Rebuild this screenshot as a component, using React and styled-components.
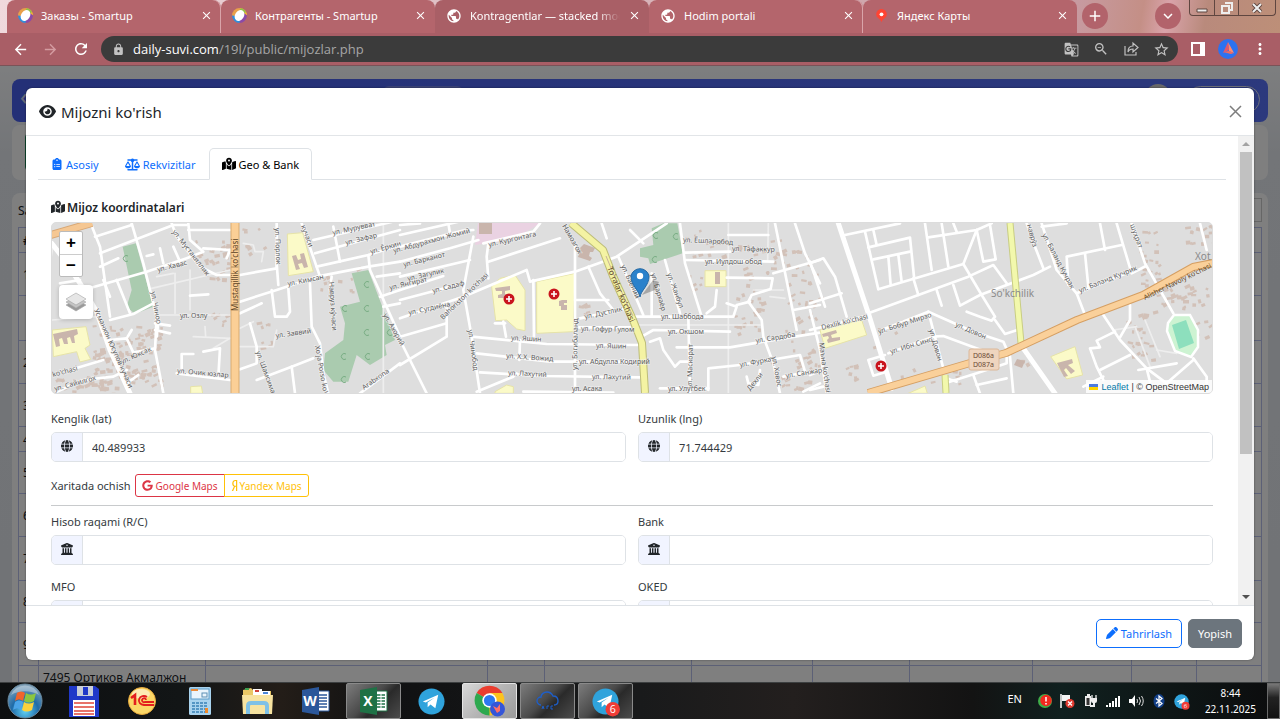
import React from "react";
import styled, { createGlobalStyle, css } from "styled-components";
import {
  FaEye,
  FaClipboardList,
  FaScaleBalanced,
  FaMapLocationDot,
  FaGlobe,
  FaBuildingColumns,
  FaGoogle,
  FaYandex,
  FaPen,
} from "react-icons/fa6";
import {
  MdArrowBack,
  MdArrowForward,
  MdRefresh,
  MdLock,
  MdGTranslate,
  MdZoomOut,
  MdStarBorder,
  MdMoreVert,
  MdClose,
  MdAdd,
  MdExpandMore,
  MdPublic,
} from "react-icons/md";

const uiFont = `"Noto Sans", "Open Sans", sans-serif`;

const GlobalStyle = createGlobalStyle`
  *, *::before, *::after { box-sizing: border-box; }
  body { margin: 0; font-family: ${uiFont}; font-size: 11px; color: #212529; }
  button, input { font: inherit; color: inherit; margin: 0; }
  button { padding: 0; border: 0; background: none; cursor: pointer; }
  a { text-decoration: none; }
  svg { display: block; flex: none; }
`;

const Desktop = styled.div`
  height: 100vh;
  display: flex;
  flex-direction: column;
  overflow: hidden;
`;

/* ---------- browser chrome ---------- */

const TabStrip = styled.header`
  display: flex;
  flex: none;
  height: 33px;
  padding-left: 7px;
  background: linear-gradient(100deg, #f0d9dd 0%, #c79aa0 84%, #c48f86 89%, #d9a3aa 91%, #b98a7c 94%, #bd8f78 100%);
`;

const Tab = styled.div`
  flex: 0 1 214px;
  min-width: 0;
  display: flex;
  align-items: center;
  gap: 8px;
  padding: 0 8px 2px 11px;
  border-radius: 8px 8px 0 0;
  color: #fff;
  background: ${(p) => (p.$active ? "#a95f66" : "#b4656c")};
  box-shadow: ${(p) => (p.$divided ? "inset -1px 0 0 #d9a4a9" : "none")};
`;

const TabTitle = styled.span`
  flex: 1;
  min-width: 0;
  overflow: hidden;
  white-space: nowrap;
  font-size: 11px;
  ${(p) => p.$fade && css`mask-image: linear-gradient(90deg, #000 85%, transparent);`}
`;

const StripButton = styled.button`
  width: 26px;
  height: 26px;
  margin: 3px 0 0 ${(p) => p.$gap}px;
  flex: none;
  display: grid;
  place-items: center;
  border-radius: 50%;
  background: #b2636b;
  color: #fff;
`;

const PlainButton = styled.button`
  display: grid;
  place-items: center;
  flex: none;
`;

const WindowButtons = styled.div`
  display: flex;
  flex: none;
  height: 16px;
  margin: 0 4px 0 auto;
  border: 1px solid #5f4640;
  border-top: 0;
  border-radius: 0 0 4px 4px;
`;

const WindowButton = styled.button`
  width: ${(p) => p.$wide || 24}px;
  display: grid;
  place-items: center;
  & + & { border-left: 1px solid #5f4640; }
`;

const Toolbar = styled.div`
  flex: none;
  height: 33px;
  display: flex;
  align-items: center;
  padding: 0 11px 0 12px;
  background: #a95e66;
  color: #fff;
  border-bottom: 1px solid #7a5358;
`;

const NavButtons = styled.nav`
  display: flex;
  gap: 13px;
  margin-right: 11px;
`;

const Omnibox = styled.div`
  flex: 1;
  height: 26px;
  display: flex;
  align-items: center;
  gap: 8px;
  padding: 0 8px 0 11px;
  border-radius: 13px;
  background: #3b3b3b;
  color: #c2c2c2;
`;

const Address = styled.div`
  flex: 1;
  font-family: "Open Sans", sans-serif;
  font-size: 13px;
  color: #a6a6a6;
  b { font-weight: 400; color: #fff; }
`;

const OmniActions = styled.div`
  display: flex;
  gap: 14px;
`;

const BrowserActions = styled.div`
  display: flex;
  align-items: center;
  gap: 13px;
  margin-left: 13px;
`;

/* ---------- page behind the dialog ---------- */

const Viewport = styled.div`
  position: relative;
  flex: 1;
  min-height: 0;
  overflow: hidden;
  background: linear-gradient(#fbfdff 0, #e6eaf0 90px, #e2e6ec 100%);
`;

const Page = styled.div`
  height: 100%;
  overflow: hidden;
  padding: 13px 12px 0;
  font-size: 12px;
`;

const Navbar = styled.div`
  height: 43px;
  display: flex;
  align-items: flex-start;
  justify-content: flex-end;
  gap: 16px;
  padding: 5px 8px 0 8px;
  border-radius: 8px;
  color: #fff;
  background: linear-gradient(90deg, #4860ee, #5872fa);
`;

const BackMark = styled.button`
  width: 28%;
  margin-top: 4px;
  text-align: left;
  font-size: 24px;
  line-height: 16px;
  color: #cdd3f0;
`;

const NavSearch = styled.span`
  width: 80px;
  height: 28px;
  margin: 2px auto 0 0;
  border-radius: 6px;
  background: #7686ee;
`;

const Avatar = styled.span`
  width: 26px;
  height: 26px;
  border-radius: 50%;
  background: #d0d0d0;
`;

const Pill = styled.span`
  width: 73px;
  height: 27px;
  margin-top: 2px;
  border: 1px solid #dfe3f5;
  border-radius: 14px;
`;

const Card = styled.section`
  margin-top: ${(p) => p.$gap}px;
  height: ${(p) => p.$h || "auto"};
  padding: ${(p) => p.$pad || "0"};
  border-radius: 8px;
  background: #fff;
`;

const FilterField = styled.div`
  width: 50%;
  height: 38px;
  border: 1px solid #198754;
  border-radius: 4px;
`;

const CardTools = styled.div`
  display: flex;
  align-items: center;
  height: 34px;
`;

const SearchSpot = styled.span`
  width: 120px;
  height: 24px;
  margin-left: auto;
  border: 1px solid #ccc;
`;

const DataTable = styled.table`
  width: 100%;
  table-layout: fixed;
  border-collapse: collapse;
  th, td {
    border: 1px solid #b9c1ec;
    padding: 0 4px;
    text-align: left;
    font-size: 12px;
  }
`;

const DataRow = styled.tr`
  height: ${(p) => p.$h}px;
`;

const NameCell = styled.td`
  vertical-align: top;
  line-height: 24px;
`;

/* ---------- dialog ---------- */

const Backdrop = styled.div`
  position: absolute;
  inset: 0;
  display: flex;
  padding: 22px 26px;
  background: rgba(0, 0, 0, 0.5);
`;

const Dialog = styled.div`
  flex: 1;
  min-width: 0;
  display: flex;
  flex-direction: column;
  border-radius: 6px;
  overflow: hidden;
  background: #fff;
  box-shadow: 0 0 2px rgba(0, 0, 0, 0.5);
`;

const DialogHeader = styled.div`
  flex: none;
  height: 48px;
  display: flex;
  align-items: center;
  gap: 5px;
  padding: 0 12px 0 13px;
  border-bottom: 1px solid #e2e5e8;
`;

const DialogTitle = styled.h1`
  margin: 0;
  flex: 1;
  font-size: 15px;
  font-weight: 400;
`;

const DialogMain = styled.div`
  flex: 1;
  min-height: 0;
  display: flex;
`;

const DialogBody = styled.div`
  flex: 1;
  min-width: 0;
  overflow: hidden;
  padding: 12px 12px 0;
`;

const Scrollbar = styled.div`
  width: 16px;
  flex: none;
  display: flex;
  flex-direction: column;
  align-items: center;
  background: #f1f1f1;
`;

const ScrollArrow = styled.button`
  width: 16px;
  height: 16px;
  flex: none;
  display: grid;
  place-items: center;
`;

const ScrollTrack = styled.div`
  flex: 1;
  width: 12px;
`;

const ScrollThumb = styled.div`
  height: 69%;
  background: #c1c1c1;
`;

const TabNav = styled.div`
  display: flex;
  height: 32px;
  border-bottom: 1px solid #dee2e6;
`;

const NavTab = styled.button`
  display: flex;
  align-items: center;
  gap: 3px;
  height: 32px;
  padding: 0 12px;
  border: 1px solid transparent;
  border-radius: 5px 5px 0 0;
  color: #0d6efd;
  ${(p) => p.$active && css`
    color: #000;
    background: #fff;
    border-color: #dee2e6;
    border-bottom-color: #fff;
  `}
`;

const Panel = styled.div`
  padding: 18px 13px 0;
`;

const SectionTitle = styled.h2`
  display: flex;
  align-items: center;
  gap: 2px;
  height: 18px;
  margin: 0 0 6px;
  font-size: 12px;
  font-weight: 600;
`;

const MapFrame = styled.div`
  position: relative;
  height: 172px;
  border: 1px solid #dcdcdc;
  border-radius: 5px;
  overflow: hidden;
  background: #dedede;
  svg.tiles { width: 100%; height: 100%; }
`;

const ZoomControl = styled.div`
  position: absolute;
  left: 7px;
  top: 8px;
  width: 24px;
  border: 1px solid #bbb;
  border-radius: 2px;
  background: #fff;
`;

const ZoomButton = styled.button`
  display: block;
  width: 100%;
  height: 22px;
  font: 700 17px/20px "Liberation Sans", sans-serif;
  color: #000;
  & + & { border-top: 1px solid #ccc; }
`;

const LayersButton = styled.button`
  position: absolute;
  left: 7px;
  top: 62px;
  width: 34px;
  height: 34px;
  display: grid;
  place-items: center;
  border-radius: 4px;
  background: #fff;
  box-shadow: 0 1px 4px rgba(0, 0, 0, 0.2);
`;

const Attribution = styled.div`
  position: absolute;
  right: 0;
  bottom: 0;
  display: flex;
  align-items: center;
  gap: 3px;
  height: 13px;
  padding: 0 3px;
  background: rgba(255, 255, 255, 0.85);
  font: 9px "Liberation Sans", sans-serif;
  color: #333;
  a { color: #0078a8; }
`;

const FieldGrid = styled.div`
  display: grid;
  grid-template-columns: 1fr 1fr;
  gap: 13px 12px;
  margin-top: ${(p) => p.$top}px;
`;

const FieldLabel = styled.label`
  display: block;
  height: 18px;
  line-height: 18px;
  margin-bottom: 4px;
  color: #343a40;
`;

const InputGroup = styled.div`
  display: flex;
  height: 30px;
  border: 1px solid #dee2e6;
  border-radius: 5px;
  overflow: hidden;
`;

const Addon = styled.span`
  width: 31px;
  flex: none;
  display: grid;
  place-items: center;
  padding-bottom: 2px;
  border-right: 1px solid #dee2e6;
  background: #f1f4ff;
`;

const TextInput = styled.input`
  flex: 1;
  min-width: 0;
  padding: 1px 9px 0;
  border: 0;
  outline: 0;
  background: #fff;
  color: #343a40;
`;

const OpenRow = styled.div`
  display: flex;
  align-items: center;
  gap: 4px;
  height: 23px;
  margin-top: 12px;
  color: #343a40;
`;

const ButtonGroup = styled.div`
  display: flex;
  height: 23px;
`;

const MapLink = styled.a`
  display: flex;
  align-items: center;
  gap: 3px;
  padding: 0 6px;
  border: 1px solid;
  font-size: 10px;
  color: ${(p) => p.$tone};
  &:first-child { border-radius: 3px 0 0 3px; }
  &:last-child { gap: 0; padding: 0 6px 0 4px; border-radius: 0 3px 3px 0; margin-left: -1px; }
`;

const Rule = styled.hr`
  margin: 8px 0 0;
  border: 0;
  border-top: 1px solid #c8cacc;
`;

const DialogFooter = styled.div`
  flex: none;
  height: 55px;
  display: flex;
  align-items: center;
  justify-content: flex-end;
  gap: 6px;
  padding: 0 12px;
  border-top: 1px solid #dee2e6;
`;

const ActionButton = styled.button`
  display: flex;
  align-items: center;
  gap: 3px;
  height: 29px;
  padding: 0 9px;
  border: 1px solid ${(p) => (p.$solid ? "#6c757d" : "#0d6efd")};
  border-radius: 5px;
  background: ${(p) => (p.$solid ? "#6c757d" : "#fff")};
  color: ${(p) => (p.$solid ? "#fff" : "#0d6efd")};
`;

/* ---------- taskbar ---------- */

const Taskbar = styled.footer`
  flex: none;
  height: 37px;
  display: flex;
  align-items: stretch;
  border-top: 1px solid #3c3f40;
  background: linear-gradient(90deg, #0d0f10 0, #121516 14%, #231d18 22%, #101112 30%, #191a1b 50%, #231f1e 62%, #131313 76%, #10201f 83%, #0c0c0d 100%);
  color: #fff;
`;

const StartButton = styled.button`
  width: 50px;
  margin-right: 6px;
  display: grid;
  place-items: center;
`;

const TaskButton = styled.button`
  width: 55px;
  margin-right: 3px;
  display: grid;
  place-items: center;
  border: 1px solid transparent;
  border-radius: 2px;
  ${(p) => p.$open && css`
    border-color: #8a8a8a;
    background: linear-gradient(135deg, #7c7c7c 0%, #4a4a4a 45%, #2a2a2a 60%, #4b4b4b 100%);
  `}
  ${(p) => p.$current && css`
    border-color: #e4e4e4;
    background: linear-gradient(135deg, #d8d8d8 0%, #b5b5b5 50%, #9a9a9a 100%);
  `}
`;

const Tray = styled.div`
  display: flex;
  align-items: center;
  gap: 7px;
  margin-left: auto;
`;

const Language = styled.span`
  font-size: 11px;
  margin: 0 9px 6px 0;
`;

const Clock = styled.div`
  margin: 0 4px 0 9px;
  text-align: center;
  font-size: 10px;
  line-height: 16px;
`;

const ShowDesktop = styled.button`
  width: 13px;
  height: 36px;
  border: 1px solid #6a6a6a;
  background: linear-gradient(#777, #222 40%, #111);
`;

/* ---------- map drawing ---------- */

const west = {
  minor: [
    "272,280 300,350 330,560", "395,280 430,400 470,560 465,660 490,790", "285,320 395,285",
    "300,370 520,285 560,285", "300,410 355,385", "250,480 440,425 560,385 610,365 570,330 565,280",
    "330,570 400,552 460,520", "350,450 390,550", "310,450 330,500", "440,378 460,373", "480,355 490,400",
    "520,350 540,395", "610,355 690,360 680,385", "565,300 690,300", "515,280 530,320 600,410 650,435 690,435", "720,435 830,415 830,280",
    "720,515 830,480 950,440 1105,410 1200,395", "720,550 785,520", "815,480 825,560 860,560 870,545 865,475",
    "830,400 835,465", "930,460 935,590 960,640 970,730 985,790", "905,280 960,440", "940,330 1200,270",
    "945,370 1200,300", "950,410 1105,375 1200,345", "1000,290 1020,395", "995,440 990,480", "465,580 510,587",
    "465,600 510,610", "475,575 470,620", "545,730 545,672 580,672", "610,665 660,655 655,740",
    "330,630 380,625 400,668 465,655", "380,625 395,600", "210,720 310,690", "170,785 250,750 340,740 380,720",
    "530,730 690,750", "720,718 770,700 770,650 750,580", "770,750 875,710 940,685", "875,710 885,790",
    "1105,375 1110,420 1200,620", "1080,790 1200,700", "1140,500 1200,480", "1130,440 1200,430",
    "1150,530 1200,520", "570,497 625,493", "180,460 240,450", "380,760 415,735",
  ],
  faint: [
    "455,475 690,420", "470,555 690,555", "580,620 690,625", "615,590 617,620", "525,430 525,550", "570,420 570,540",
    "720,595 760,575", "730,340 760,345 765,365 790,365 785,395", "160,345 150,400", "640,655 690,625",
    "720,650 820,650 830,600", "1150,280 1150,790", "520,430 470,440", "155,570 290,560",
  ],
  major: ["155,340 190,385 240,460 290,545 330,660 390,790"],
  green: ["368,350 408,340 460,530 405,552 380,530 395,480",
    "1055,430 1105,420 1185,630 1155,645 1160,675 1110,705 1070,675 1045,755 1000,755 970,720 975,670 1030,630 1035,580 1020,530 1080,515"],
  yellow: ["862,312 908,308 940,425 865,437", "157,600 258,590 270,645 255,655 272,688 240,696 230,665 160,680", "572,770 604,768 608,790 572,790"],
};

const centre = {
  minor: [
    "0,75 220,25", "0,45 60,40", "0,155 150,115 235,90", "0,110 190,62 220,60", "0,200 210,150", "0,240 130,198",
    "0,270 190,220", "0,325 190,260 380,180 390,215 525,185 650,140 800,40", "265,100 260,140 265,205",
    "265,155 480,85", "250,100 400,65 420,40", "220,80 190,240 215,380 240,550", "145,40 150,70",
    "0,380 140,340", "0,465 140,380 140,290", "215,380 440,402 720,405", "230,430 450,455 720,455",
    "240,487 430,498 720,502", "230,545 340,500 350,490", "400,210 402,380", "525,110 525,550", "525,270 625,270", "565,170 600,250 640,300",
    "540,325 680,295", "690,320 1000,320 1010,290 980,280", "525,352 690,352", "725,380 760,360 990,365", "830,412 990,412 1090,395 1260,368",
    "655,140 730,315", "755,190 755,320", "795,150 840,310", "840,40 855,160 905,320", "865,320 870,550",
    "750,395 780,385 790,420 825,470 840,455 870,455", "925,540 925,475 1020,465 1200,435 1215,485", "780,535 925,535",
    "855,150 1120,155", "855,128 990,125", "985,75 1105,75", "980,203 1118,205 1112,237 1055,255 1045,275 1085,330 1090,380 1120,460 1140,550",
    "1125,40 1190,360", "1185,40 1215,130 1260,220", "1120,190 1260,150", "1180,300 1260,285", "605,40 620,85",
    "0,390 80,550", "310,335 318,380", "285,340 315,340", "360,390 358,450", "370,545 640,548", "730,100 690,60",
    "1010,285 1050,275", "1040,500 1045,520 1075,525 1080,480", "1150,500 1260,480", "1210,545 1260,520", "950,240 945,290 920,310",
  ],
  faint: ["700,345 1080,345", "985,40 985,550", "1105,40 1103,150", "1060,240 1150,240", "1110,260 1155,265", "870,400 870,420"],
  major: [],
  green: ["755,55 790,40 832,40 848,130 750,162 745,145 720,140 720,115 760,105"],
  yellow: ["275,230 300,205 345,195 375,240 375,362 350,357 320,330 287,332", "410,215 525,190 520,365 410,370", "915,182 978,182 978,230 915,230", "285,545 320,525 340,530 340,550 285,550"],
};

const east = {
  minor: [
    "105,315 270,280", "165,305 205,478 460,402", "175,352 300,323 312,440", "190,388 300,365", "235,380 242,465",
    "190,300 200,345", "265,375 275,455", "345,280 365,420", "355,322 500,300 545,280", "395,280 415,410",
    "430,280 440,305", "500,300 520,395 557,388 540,285", "500,300 460,402 515,495 555,560 545,572 510,560 470,545",
    "175,550 325,495 475,440 550,405 590,460", "310,445 325,495", "380,480 395,527", "430,465 450,527 510,495 670,435 720,410",
    "215,600 355,545 400,715", "355,545 490,605 580,635 600,680 610,790", "235,670 370,620 400,618 540,670",
    "555,570 585,612 622,600", "230,725 190,737 175,690 225,675", "650,280 675,350 700,415", "695,280 740,420 800,490 825,555",
    "695,290 770,280", "775,465 770,380 935,345", "825,370 835,470", "870,280 885,360", "920,280 965,430 1008,408",
    "800,490 960,425", "965,280 1005,400 1090,550", "960,525 960,570 930,622", "880,555 930,630 1010,715 1070,760 1150,690",
    "915,605 860,632 870,652 840,655 860,710 880,750", "870,720 960,675", "1150,685 1190,740 1190,760", "1170,280 1190,360",
    "0,400 40,385 75,440 110,560", "0,520 95,490", "0,600 160,560", "0,540 30,660 50,790", "0,395 45,530",
    "405,760 500,730 590,700 590,675", "410,745 440,755", "490,735 510,790", "500,765 590,745", "1010,715 1020,755",
    "985,720 1100,700", "820,770 880,740", "0,735 50,715", "0,780 40,770",
  ],
  faint: ["975,590 1020,710", "1005,570 1050,680", "910,600 980,590", "1040,660 1100,670"],
  major: ["85,280 175,550 245,775", "640,655 735,790"],
  green: [],
  yellow: ["30,600 155,570 170,615 45,655", "722,680 795,650 818,735 770,747", "295,790 345,768 352,790"],
};

/* clusters of small houses: x, y, width, height, count */
const houseClusters = [
  [195, 240, 34, 40, 34], [92, 325, 70, 62, 110], [52, 375, 60, 18, 30], [240, 225, 24, 34, 7],
  [150, 330, 12, 14, 6], [255, 320, 24, 28, 8], [314, 277, 42, 14, 10], [205, 310, 20, 14, 6],
  [683, 230, 44, 30, 12], [685, 268, 20, 24, 5], [735, 238, 70, 66, 36], [733, 305, 30, 30, 16],
  [780, 250, 40, 120, 36], [576, 305, 10, 14, 5], [1138, 225, 20, 60, 22],
  [1150, 285, 56, 22, 30], [1184, 223, 28, 20, 14], [1120, 310, 36, 50, 24], [1195, 320, 14, 20, 5],
  [835, 365, 20, 20, 8], [872, 320, 40, 30, 6], [900, 366, 70, 20, 10], [1018, 352, 12, 12, 3],
  [770, 360, 50, 30, 16], [350, 265, 14, 22, 5],
];

const houses = [];
let seed = 11;
const rnd = () => {
  seed = (seed * 16807) % 2147483647;
  return seed / 2147483647;
};
houseClusters.forEach(([x, y, w, h, n]) => {
  for (let i = 0; i < n; i += 1) {
    houses.push([x + rnd() * w, y + rnd() * h, 2 + rnd() * 4, 2 + rnd() * 2, rnd() * 50 - 35]);
  }
});

const streets = [
  ["ул. Мустакиллик", 172, 232, 52], ["ул. Хавас", 158, 272, -14], ["ул. Озлу", 180, 318, 0],
  ["ул. Чинор", 151, 292, 80], ["ул. Юксак", 122, 364, -24], ["ул. Очик юзлар", 177, 373, 5],
  ["ул. Сайилгох", 55, 391, -15], ["ko'chasi", 53, 377, -15], ["Усманхон Юсупов кучаси", 94, 310, 66],
  ["ул. Порлок", 275, 228, 88], ["кучаси", 301, 226, 70], ["ул. Кимсан", 288, 286, -11],
  ["ул. Заввий", 276, 338, -8], ["ул. Шамсимат", 256, 352, 70], ["ул. Мурувват", 333, 235, -12],
  ["ул. Зафар", 346, 245, -14], ["ул. Ёркин", 371, 254, -16], ["Навруз кўчаси", 329, 282, 86],
  ["Xo'ja Porso ko'chasi", 315, 346, 80], ["ул. Ахорий", 383, 315, 60], ["Arabxona", 364, 390, -35],
  ["ул. Абдурахмон Жомий", 394, 253, -15], ["ул. Барканот", 404, 267, -14], ["ул. Загулик", 408, 281, -13],
  ["ул. Янгират", 390, 290, -13], ["ул. Садаф", 433, 293, -14], ["ул. Сугдиёна", 409, 315, -12],
  ["Bahoriston ko'chasi", 443, 320, -44], ["ул. Кургонтагa", 489, 247, -13], ["ул. Чинобод", 468, 330, 82],
  ["Намозгох", 562, 226, 60], ["ул. Богибаланд", 577, 370, -89], ["ул. Яшин", 511, 340, 3],
  ["ул. Х.Х. Вожид", 506, 358, 4], ["ул. Лахутий", 508, 375, 3], ["ул. Дустлик", 585, 319, -12],
  ["ул. Гофур Гулом", 581, 331, 1], ["ул. Яшин", 596, 348, 1], ["ул. Абдулла Кодирий", 579, 364, 0],
  ["ул. Лахутий", 592, 379, 1], ["ул. Асака", 572, 391, 0], ["ул. Баёний", 621, 266, 66],
  ["ул. Бархаёр", 651, 274, 74], ["ул. Жанбул", 667, 274, 70], ["ул. Шаббода", 661, 319, 0],
  ["ул. Окшом", 668, 334, 0], ["ул. Маскорат", 692, 388, -89], ["ул. Улугбек", 668, 391, 0],
  ["ул. Ёшларобод", 683, 242, 3], ["ул. Тафаккур", 732, 251, 1], ["ул. Иулдош обод", 705, 264, 0],
  ["ул. Сардоба", 756, 343, -9], ["ул. Фуркат", 740, 367, -10], ["ул. Санжар", 786, 378, -9],
  ["ул. Ховос", 772, 357, 80], ["Дехли", 750, 391, -50],
  ["Dexlik ko'chasi", 822, 330, -14], ["Маъна ko'chasi", 819, 343, 82], ["ул. Бобур Мирзо", 879, 334, -18],
  ["ул. Ибн Сино", 891, 354, -17], ["ул. Довон", 955, 326, 24], ["ул. Довон", 929, 330, 74],
  ["наврўз", 1027, 225, 75], ["ул. Баланд Кучрак", 1042, 235, 62], ["ул. Баланд Кучрик", 1080, 293, -22],
  ["шуҳрат", 1130, 225, 70],
];

const Lines = ({ list, color, width }) => (
  <g fill="none" stroke={color} strokeWidth={width} strokeLinejoin="round" strokeLinecap="round">
    {list.map((p) => <polyline key={p} points={p} />)}
  </g>
);

const District = ({ at, data }) => (
  <g transform={`translate(${at}) scale(0.33333)`}>
    {data.green.map((p) => <polygon key={p} points={p} fill="#aacbaf" />)}
    {data.yellow.map((p) => <polygon key={p} points={p} fill="#fbfac8" stroke="#e6e3a8" strokeWidth="3" />)}
    <Lines list={data.faint} color="#eeeeee" width={5} />
    <Lines list={data.minor} color="#ffffff" width={8} />
    <Lines list={data.major} color="#ffffff" width={15} />
  </g>
);

const Highway = ({ points, casing, fill, width }) => (
  <g fill="none" strokeLinejoin="round">
    <polyline points={points} stroke={casing} strokeWidth={width + 2} />
    <polyline points={points} stroke={fill} strokeWidth={width} />
  </g>
);

const Hospital = ({ x, y }) => (
  <g>
    <circle cx={x} cy={y} r="5.5" fill="#c9141d" />
    <path d={`M${x - 3} ${y}h6M${x} ${y - 3}v6`} stroke="#fff" strokeWidth="1.6" />
  </g>
);

const MapDrawing = () => (
  <svg className="tiles" viewBox="51 223 1162 170" preserveAspectRatio="xMidYMid slice" role="img" aria-label="Xarita">
    <rect x="51" y="223" width="1162" height="170" fill="#dedede" />
    <polygon points="478,223 541,223 512,240 475,245" fill="#ead2e2" />
    <g fill="#d2c1b8">
      {houses.map(([x, y, w, h, r], i) => (
        <rect key={i} x={x} y={y} width={w} height={h} transform={`rotate(${r} ${x} ${y})`} />
      ))}
    </g>
    <District at="0 130" data={west} />
    <District at="400 210" data={centre} />
    <District at="810 130" data={east} />
    <g fill="#c9b5ac">
      <path d="M292 256l4-1 2 5 3-1-1-5 4-1 4 14-4 1-2-5-4 1 2 5-4 1z" />
      <path d="M53 334l24-5 1 5-4 2 1 7-3 0-2-6-3 1 1 6-4 0-2-6-3 1 1 7-4 1z" />
      <path d="M495 288l15-2v4l-5 1v3l4 0v4h-11v-3l4-1v-3l-6 0z" />
      <path d="M562 300h5v3h-3v2h3v5h-6v-4h-2v-5z" />
      <path d="M715 272h5v12h-5z M479 223h13v11h-13z" />
      <path d="M580 248l4-4 11 4-2 4-3 0-1 4 3 2-2 3-12-4z" />
      <path d="M822 334l14-4 1 3-6 2 1 3 8-1 0 3-12 3-1-3 2-2-1-2-5 1z" />
      <path d="M1057 363l15-4 1 4-5 2 7 6-4 3-5-6-2 2 4 6-4 1z" />
      <path d="M1017 359l8 2-3 7-8-3z" />
    </g>
    <g fill="none" stroke="#79ad84" strokeWidth="1">
      {[[345, 308], [367, 284], [367, 308], [367, 332], [344, 356], [368, 356], [390, 332], [344, 379], [656, 235], [676, 236], [655, 259], [126, 258]].map(([x, y]) => (
        <path key={`${x}-${y}`} d={`M${x + 2} ${y - 2}a3 3 0 1 0 0 5`} />
      ))}
    </g>
    <Highway points="51,235 92,223" casing="#d8a876" fill="#f5c793" width={6} />
    <Highway points="235,223 235,393" casing="#d9ab70" fill="#fbcf96" width={7} />
    <Highway points="571,223 603,250 613,276 633,320 642,343 645,393" casing="#bdbd78" fill="#f4f3a3" width={6} />
    <polyline points="606,256 616,280 633,316" fill="none" stroke="#c9b39a" strokeWidth="1" />
    <Highway points="1010,223 1021,343" casing="#c8cd82" fill="#f2f8ac" width={5} />
    <Highway points="945,375 946,393" casing="#c8cd82" fill="#f2f8ac" width={5} />
    <Highway points="868,393 970,363 1006,353 1077,320 1143,295 1193,267 1213,263" casing="#d59f63" fill="#fad09a" width={6} />
    <polygon points="1168,323 1174,315 1190,315 1198,330 1198,347 1191,357 1175,351 1167,331" fill="#cdf3d2" stroke="#fff" strokeWidth="2.5" />
    <polygon points="1172,325 1186,320 1194,343 1179,349" fill="#8ddfbd" />
    <Hospital x={509} y={299} />
    <Hospital x={554} y={294} />
    <Hospital x={881} y={366} />
    <g fontFamily={`"Noto Sans", sans-serif`} fontSize="7" fill="#5c5c5c" stroke="#f4f4f4" strokeOpacity="0.6" strokeWidth="1.5" paintOrder="stroke">
      {streets.map(([name, x, y, r]) => (
        <text key={`${name}${x}`} x={x} y={y} transform={`rotate(${r} ${x} ${y})`}>{name}</text>
      ))}
    </g>
    <g fontFamily={`"Noto Sans", sans-serif`} fontSize="8" fill="#5c4526">
      <text x="238" y="311" transform="rotate(-90 238 311)">Mustaqillik ko'chasi</text>
      <text x="607" y="268" transform="rotate(67 607 268)">To'ralar ko'chasi</text>
      <text x="1145" y="300" fontSize="7" transform="rotate(-26 1145 300)">Alisher Navoiy ko'chasi</text>
    </g>
    <g fontFamily={`"Noto Sans", sans-serif`} fontSize="10" fill="#8a8a8a">
      <text x="991" y="297">So'kchilik</text>
      <text x="1195" y="260">Xot</text>
    </g>
    <rect x="969" y="349" width="30" height="21" rx="2" fill="#efd5bf" stroke="#dcb898" />
    <g fontFamily={`"Noto Sans", sans-serif`} fontSize="7" fill="#6b4a34">
      <text x="973" y="358">D086a</text>
      <text x="973" y="367">D087a</text>
    </g>
    <path d="M642 295l11-15 6 2-4 8z" fill="#000" opacity="0.25" />
    <path d="M640 297c-1-7-9-11-9-21a9.200 9.200 0 0 1 18 0c0 10-8 14-9 21z" fill="#2a81cb" stroke="#2368a3" />
    <circle cx="640" cy="276" r="3.200" fill="#fff" />
  </svg>
);

/* ---------- small pictures ---------- */

const SmartupIcon = () => (
  <svg width="15" height="15" viewBox="0 0 15 15">
    <path d="M7.500 0A7.500 7.500 0 0 1 15 7.500L10 5z" fill="#f2b630" />
    <path d="M0 7.500A7.500 7.500 0 0 1 7.500 0l3 5-8 4z" fill="#e9a04a" />
    <path d="M15 7.500A7.500 7.500 0 0 1 7.500 15L6 10l6-5z" fill="#8b4aa8" />
    <path d="M7.500 15A7.500 7.500 0 0 1 0 7.500L4 8l4 4z" fill="#2f8fdc" />
    <path d="M9 0a7.500 7.500 0 0 1 5 4l-3 2-4-3z" fill="#8fc04a" />
    <ellipse cx="7.500" cy="7.500" rx="4.400" ry="5.800" fill="#fff" transform="rotate(35 7.500 7.500)" />
  </svg>
);

const YandexPin = () => (
  <svg width="15" height="15" viewBox="0 0 15 15">
    <path d="M7.500 1a5.300 5.300 0 0 1 5.300 5.300c0 4-4.300 4-5.300 8-1-4-5.300-4-5.300-8A5.300 5.300 0 0 1 7.500 1z" fill="#f43" />
    <circle cx="7.500" cy="6.300" r="1.900" fill="#fff" />
  </svg>
);

const ShareIcon = () => (
  <svg width="16" height="16" viewBox="0 0 16 16" fill="none" stroke="currentColor" strokeWidth="1.200">
    <path d="M2 5v9h11v-3M5 11c0-4 2-6 5-6V2l5 4.500-5 4.500V8c-2 0-4 .5-5 3z" />
  </svg>
);

const SidePanelIcon = () => (
  <svg width="14" height="14" viewBox="0 0 14 14"><path d="M0 0h14v14H0z" fill="#fff" /><path d="M2 2h7v10H2z" fill="#a95e66" /></svg>
);

const ProfileIcon = ({ size = 20 }) => (
  <svg width={size} height={size} viewBox="0 0 20 20">
    <circle cx="10" cy="10" r="10" fill="#2d72f0" />
    <path d="M10 3l1 9 5 2z" fill="#ff8a70" /><path d="M10 3l1 8-6 3z" fill="#e2576b" /><path d="M5 13l6-1 5 2-3 1z" fill="#f06a60" />
  </svg>
);

const LayersIcon = () => (
  <svg width="22" height="22" viewBox="0 0 22 22" stroke="#a5a5a5" strokeWidth=".6">
    <path d="M1 14l10 6 10-6-3-1.500-7 4-7-4z" fill="#9a9a9a" />
    <path d="M1 11l10 6 10-6-3-1.500-7 4-7-4z" fill="#c4c4c4" />
    <path d="M11 2l10 6-10 6L1 8z" fill="#e6e6e6" />
  </svg>
);

const UkraineFlag = () => (
  <svg width="9" height="6" viewBox="0 0 9 6"><path d="M0 0h9v3H0z" fill="#4c7be1" /><path d="M0 3h9v3H0z" fill="#ffd500" /></svg>
);

const WindowsOrb = () => (
  <svg width="36" height="36" viewBox="0 0 36 36">
    <defs>
      <radialGradient id="orb" cx=".5" cy=".8" r=".8"><stop offset="0" stopColor="#5fd0f5" /><stop offset=".5" stopColor="#1f6ba8" /><stop offset="1" stopColor="#8aa7bb" /></radialGradient>
    </defs>
    <circle cx="18" cy="18" r="17" fill="url(#orb)" stroke="#6b8ba0" />
    <path d="M10 10c3-2 5-2 8 0l-2 8c-3-2-5-2-8 0z" fill="#f0642c" />
    <path d="M19 10c3 2 6 2 10 0l-2 8c-4 2-7 2-10 0z" fill="#8cc640" />
    <path d="M8 19c3-2 5-2 8 0l-2 8c-3-2-5-2-8 0z" fill="#4ba4e8" />
    <path d="M17 19c3 2 6 2 10 0l-2 8c-4 2-7 2-10 0z" fill="#fbd13b" />
    <path d="M4 12a15 15 0 0 1 28 0c-8-5-20-5-28 0z" fill="#fff" opacity=".35" />
  </svg>
);

const FloppyIcon = () => (
  <svg width="30" height="31" viewBox="0 0 30 31">
    <path d="M0 0h26l4 3v28H0z" fill="#2038c8" /><path d="M8 0h16v10H8z" fill="#c9ced8" /><path d="M14 1h5v8h-5z" fill="#2038c8" />
    <path d="M4 14h22v16H4z" fill="#fff" /><path d="M5 17h20M5 21h20M5 25h20M5 28h20" stroke="#e0453a" strokeWidth="1.300" />
  </svg>
);

const OneCIcon = () => (
  <svg width="28" height="28" viewBox="0 0 28 28">
    <circle cx="14" cy="14" r="13.500" fill="#fbd767" stroke="#e6a83c" /><ellipse cx="13" cy="7" rx="9" ry="5" fill="#fff" opacity=".5" />
    <path d="M3 11l4-3v10" fill="none" stroke="#e31e1e" strokeWidth="2.600" />
    <path d="M19 10a5 4.500 0 1 0-3 8h10M18 13a2 2 0 1 0-1 2h9" fill="none" stroke="#e31e1e" strokeWidth="1.800" />
  </svg>
);

const CalculatorIcon = () => (
  <svg width="22" height="28" viewBox="0 0 22 28">
    <rect width="22" height="28" rx="1.500" fill="#a9d3ee" /><rect x="2" y="2" width="18" height="10" fill="#eaf5fc" stroke="#5b9cc8" /><path d="M2 3h7" stroke="#e88a3a" strokeWidth="2" />
    <rect x="13" y="6" width="5" height="4" fill="none" stroke="#5b8fb4" />
    <g fill="#5596c4">{[15, 18, 21, 24].map((y) => [3, 7, 11, 15].map((x) => <rect key={`${x}${y}`} x={x} y={y} width="3" height="2" />))}</g>
    <path d="M16 21h3v5h-3z" fill="#f08a2a" />
  </svg>
);

const FolderIcon = () => (
  <svg width="31" height="28" viewBox="0 0 31 28">
    <path d="M1 3l8-2 3 3h17v22H1z" fill="#e9c766" /><path d="M11 2h9v8h-9z M19 4h9v8h-9z" fill="#fff" /><path d="M3 1h4v2H3z" fill="#3c9e50" /><path d="M13 3h4v2h-4z" fill="#d0443a" /><path d="M21 5h5v2h-5z" fill="#4b86d8" />
    <path d="M0 8h31l-1 19H1z" fill="#f7e3a0" /><path d="M6 27v-8q0-3 3-3h13q3 0 3 3v8" fill="none" stroke="#7fc1e6" strokeWidth="4" />
  </svg>
);

const OfficeIcon = ({ color, letter }) => (
  <svg width="28" height="28" viewBox="0 0 28 28">
    <path d="M14 4h13v20H14z" fill="#fff" stroke={color} />
    <path d="M17 8h8M17 11h8M17 14h8M17 17h8M17 20h8" stroke={color} strokeWidth="1.300" />
    {letter === "X" && <path d="M21 6v16" stroke="#fff" />}
    <path d="M0 3l17-3v28L0 25z" fill={color} />
    <text x="8" y="19" textAnchor="middle" fontFamily="Open Sans, sans-serif" fontWeight="700" fontSize="14" fill="#fff">{letter}</text>
  </svg>
);

const TelegramIcon = ({ size = 27, badge }) => (
  <svg width={size} height={size} viewBox="0 0 28 28" overflow="visible">
    <circle cx="14" cy="14" r="13.500" fill="#2fa3dc" /><path d="M5 14l16-7-3 14-5-4-3 3 0-5 7-5-9 5z" fill="#fff" />
    {badge && <g><circle cx="21.500" cy="22" r="7.500" fill="#f03c36" /><text x="21.500" y="26" textAnchor="middle" fontSize="11" fontFamily="Open Sans, sans-serif" fill="#fff">6</text></g>}
  </svg>
);

const ChromeIcon = () => (
  <svg width="32" height="32" viewBox="0 0 32 32">
    <path d="M15.500 15.500L2.600 8A15 15 0 0 1 28.400 8z" fill="#ea3d2f" />
    <path d="M15.500 15.500L2.600 8a15 15 0 0 0 12.900 22.500l6-8z" fill="#2da94f" />
    <path d="M15.500 15.500V8h12.900a15 15 0 0 1-12.900 22.500z" fill="#fcc31e" />
    <circle cx="15.500" cy="15.500" r="7.200" fill="#fff" /><circle cx="15.500" cy="15.500" r="5.600" fill="#2d78f0" />
    <circle cx="23.500" cy="24" r="7.500" fill="#3556d8" /><path d="M19 21l4 2 3-4v7l-3 2z" fill="#ff6f68" />
  </svg>
);

const CloudIcon = () => (
  <svg width="24" height="20" viewBox="0 0 24 20" fill="none" stroke="#1d5fcc" strokeWidth="1.300">
    <path d="M5 14a4 4 0 0 1 0-8c0-3 3-5 6-5s5 2 6 4c4 0 5 3 5 5s-1 4-4 4" />
    <path d="M6 18l1-3 1 3M11 18v-3h2M17 15h-2v3h2" strokeWidth="1" />
  </svg>
);

const AlertTray = () => (
  <svg width="14" height="14" viewBox="0 0 14 14"><circle cx="7" cy="7" r="7" fill="#3fae49" /><circle cx="8" cy="6.500" r="5.700" fill="#f0281e" /><path d="M8 3v4.500M8 9v1.500" stroke="#fff" strokeWidth="1.500" /></svg>
);
const FlagTray = () => (
  <svg width="16" height="14" viewBox="0 0 16 14"><path d="M2 0v14" stroke="#fff" strokeWidth="1.500" /><path d="M3 1h8v6H3z" fill="#f4f4f4" /><circle cx="11" cy="9.500" r="4.500" fill="#e03a30" /><path d="M9 7.500l4 4M13 7.500l-4 4" stroke="#fff" strokeWidth="1.300" /></svg>
);
const PowerTray = () => (
  <svg width="16" height="14" viewBox="0 0 16 14" fill="#eee"><path d="M3 2h2V0h3v2h1v10H3z" /><path d="M9 4h6v3q0 2-2 2v4H8v-2h3V9q-2 0-2-2z" /><path d="M10 1v3M14 1v3" stroke="#eee" strokeWidth="1.300" /><path d="M4.500 4h3v7h-3z" fill="#333" /></svg>
);
const SignalTray = () => (
  <svg width="16" height="14" viewBox="0 0 16 14" fill="#fff"><path d="M1 11h2v2H1zM4 9h2v4H4zM7 7h2v6H7zM10 4h2v9h-2zM13 2h2v11h-2z" /></svg>
);
const SoundTray = () => (
  <svg width="16" height="14" viewBox="0 0 16 14" fill="#fff"><path d="M1 5h3l3-4v12L4 9H1z" /><path d="M9 5q1 2 0 4M11 3q3 4 0 8M13.500 2q3.500 5 0 10" stroke="#ddd" fill="none" /></svg>
);
const BluetoothTray = () => (
  <svg width="16" height="14" viewBox="0 0 16 14"><ellipse cx="8" cy="7" rx="5.500" ry="7" fill="#123f87" /><path d="M5 4.500l6 5-3 2.500V2l3 2.500-6 5" fill="none" stroke="#fff" strokeWidth="1.200" /></svg>
);

const Triangle = ({ down }) => (
  <svg width="8" height="4" viewBox="0 0 8 4"><path d={down ? "M0 0h8L4 4z" : "M0 4h8L4 0z"} fill={down ? "#505050" : "#a3a3a3"} /></svg>
);

/* ---------- content ---------- */

const browserTabs = [
  { title: "Заказы - Smartup", icon: <SmartupIcon />, divided: true },
  { title: "Контрагенты - Smartup", icon: <SmartupIcon /> },
  { title: "Kontragentlar — stacked modal", icon: <MdPublic size={16} />, active: true, fade: true },
  { title: "Hodim portali", icon: <MdPublic size={16} />, divided: true },
  { title: "Яндекс Карты", icon: <YandexPin /> },
];

const rows = [
  ["1", 43], ["", 45], ["2", 43], ["3", 43], ["4", 25], ["5", 42], ["6", 43], ["7", 44], ["8", 42], ["9", 43],
  ["", 43, "7495 Ортиков Акмалжон"],
];
const columns = [20, 167, 282, 57, 148, 121, 97, 123, 99, 65, 65];

const Field = ({ id, label, icon, value = "" }) => (
  <div>
    <FieldLabel htmlFor={id}>{label}</FieldLabel>
    <InputGroup>
      <Addon>{icon}</Addon>
      <TextInput id={id} defaultValue={value} readOnly />
    </InputGroup>
  </div>
);

const tasks = [
  { name: "Total Commander", icon: <FloppyIcon /> },
  { name: "1C", icon: <OneCIcon /> },
  { name: "Calculator", icon: <CalculatorIcon /> },
  { name: "Explorer", icon: <FolderIcon /> },
  { name: "Word", icon: <OfficeIcon color="#2b579a" letter="W" /> },
  { name: "Excel", icon: <OfficeIcon color="#1e7145" letter="X" />, open: true },
  { name: "Telegram", icon: <TelegramIcon /> },
  { name: "Chrome", icon: <ChromeIcon />, current: true },
  { name: "Cloud", icon: <CloudIcon />, open: true },
  { name: "Telegram 2", icon: <TelegramIcon badge />, open: true },
];

export default function App() {
  return (
    <Desktop>
      <GlobalStyle />
      <TabStrip>
        {browserTabs.map((t) => (
          <Tab key={t.title} $active={t.active} $divided={t.divided}>
            {t.icon}
            <TabTitle $fade={t.fade}>{t.title}</TabTitle>
            <PlainButton aria-label="Close tab"><MdClose size={13} /></PlainButton>
          </Tab>
        ))}
        <StripButton $gap={5} aria-label="New tab"><MdAdd size={18} /></StripButton>
        <StripButton $gap={47} aria-label="Search tabs"><MdExpandMore size={18} /></StripButton>
        <WindowButtons>
          <WindowButton aria-label="Minimize"><svg width="12" height="12"><path d="M1 7h10v3H1z" fill="#eee" stroke="#5f4640" /></svg></WindowButton>
          <WindowButton aria-label="Restore"><svg width="12" height="12" fill="none" stroke="#eee" strokeWidth="2"><path d="M4 1h7v7H9M1 4h7v7H1z" /></svg></WindowButton>
          <WindowButton $wide={37} aria-label="Close"><svg width="10" height="10"><path d="M1 1l8 8M9 1L1 9" stroke="#5f4640" strokeWidth="4" /><path d="M1 1l8 8M9 1L1 9" stroke="#eee" strokeWidth="2" /></svg></WindowButton>
        </WindowButtons>
      </TabStrip>
      <Toolbar>
        <NavButtons>
          <PlainButton aria-label="Back"><MdArrowBack size={17} /></PlainButton>
          <PlainButton aria-label="Forward"><MdArrowForward size={17} color="#d49ca1" /></PlainButton>
          <PlainButton aria-label="Reload"><MdRefresh size={18} /></PlainButton>
        </NavButtons>
        <Omnibox>
          <MdLock size={13} />
          <Address><b>daily-suvi.com</b>/19l/public/mijozlar.php</Address>
          <OmniActions>
            <PlainButton aria-label="Translate"><MdGTranslate size={15} /></PlainButton>
            <PlainButton aria-label="Zoom"><MdZoomOut size={16} /></PlainButton>
            <PlainButton aria-label="Share"><ShareIcon /></PlainButton>
            <PlainButton aria-label="Bookmark"><MdStarBorder size={17} /></PlainButton>
          </OmniActions>
        </Omnibox>
        <BrowserActions>
          <PlainButton aria-label="Side panel"><SidePanelIcon /></PlainButton>
          <PlainButton aria-label="Profile"><ProfileIcon /></PlainButton>
          <PlainButton aria-label="Menu"><MdMoreVert size={18} /></PlainButton>
        </BrowserActions>
      </Toolbar>

      <Viewport>
        <Page aria-hidden="true">
          <Navbar>
            <BackMark tabIndex={-1}>‹</BackMark>
            <NavSearch />
            <Avatar />
            <Pill />
          </Navbar>
          <Card $gap={3} $h="55px" $pad="8px 13px"><FilterField /></Card>
          <Card $gap={13} $pad="0 6px">
            <CardTools>Saralash<SearchSpot /></CardTools>
            <DataTable>
              <colgroup>{columns.map((w, i) => <col key={i} style={{ width: `${w / 12.44}%` }} />)}</colgroup>
              <thead><DataRow $h={25}><th>#</th>{columns.slice(1).map((w, i) => <th key={i} />)}</DataRow></thead>
              <tbody>
                {rows.map(([n, h, name], i) => (
                  <DataRow key={i} $h={h}>
                    <td>{n}</td>
                    {name ? <NameCell>{name}</NameCell> : <td />}
                    {columns.slice(2).map((w, k) => <td key={k} />)}
                  </DataRow>
                ))}
              </tbody>
            </DataTable>
          </Card>
        </Page>

        <Backdrop>
          <Dialog role="dialog" aria-labelledby="dialog-title">
            <DialogHeader>
              <FaEye size={17} />
              <DialogTitle id="dialog-title">Mijozni ko'rish</DialogTitle>
              <PlainButton aria-label="Yopish">
                <svg width="13" height="13"><path d="M1 1l11 11M12 1L1 12" stroke="#7d7d7d" strokeWidth="1.500" /></svg>
              </PlainButton>
            </DialogHeader>
            <DialogMain>
              <DialogBody>
                <TabNav role="tablist">
                  <NavTab role="tab"><FaClipboardList size={12} />Asosiy</NavTab>
                  <NavTab role="tab"><FaScaleBalanced size={15} />Rekvizitlar</NavTab>
                  <NavTab role="tab" aria-selected="true" $active><FaMapLocationDot size={14} />Geo &amp; Bank</NavTab>
                </TabNav>
                <Panel role="tabpanel">
                  <SectionTitle><FaMapLocationDot size={14} />Mijoz koordinatalari</SectionTitle>
                  <MapFrame>
                    <MapDrawing />
                    <ZoomControl>
                      <ZoomButton aria-label="Zoom in">+</ZoomButton>
                      <ZoomButton aria-label="Zoom out">−</ZoomButton>
                    </ZoomControl>
                    <LayersButton aria-label="Layers"><LayersIcon /></LayersButton>
                    <Attribution><UkraineFlag /><a href="#leaflet">Leaflet</a><span>| © OpenStreetMap</span></Attribution>
                  </MapFrame>
                  <FieldGrid $top={16}>
                    <Field id="lat" label="Kenglik (lat)" icon={<FaGlobe size={12} />} value="40.489933" />
                    <Field id="lng" label="Uzunlik (lng)" icon={<FaGlobe size={12} />} value="71.744429" />
                  </FieldGrid>
                  <OpenRow>
                    <span>Xaritada ochish</span>
                    <ButtonGroup>
                      <MapLink href="#google" $tone="#dc3545"><FaGoogle size={11} />Google Maps</MapLink>
                      <MapLink href="#yandex" $tone="#ffc107"><FaYandex size={11} />Yandex Maps</MapLink>
                    </ButtonGroup>
                  </OpenRow>
                  <Rule />
                  <FieldGrid $top={7}>
                    <Field id="account" label="Hisob raqami (R/C)" icon={<FaBuildingColumns size={12} />} />
                    <Field id="bank" label="Bank" icon={<FaBuildingColumns size={12} />} />
                    <Field id="mfo" label="MFO" icon={<FaBuildingColumns size={12} />} />
                    <Field id="oked" label="OKED" icon={<FaBuildingColumns size={12} />} />
                  </FieldGrid>
                </Panel>
              </DialogBody>
              <Scrollbar>
                <ScrollArrow aria-label="Scroll up"><Triangle /></ScrollArrow>
                <ScrollTrack><ScrollThumb /></ScrollTrack>
                <ScrollArrow aria-label="Scroll down"><Triangle down /></ScrollArrow>
              </Scrollbar>
            </DialogMain>
            <DialogFooter>
              <ActionButton><FaPen size={12} />Tahrirlash</ActionButton>
              <ActionButton $solid>Yopish</ActionButton>
            </DialogFooter>
          </Dialog>
        </Backdrop>
      </Viewport>

      <Taskbar>
        <StartButton aria-label="Start"><WindowsOrb /></StartButton>
        {tasks.map((t) => (
          <TaskButton key={t.name} aria-label={t.name} $open={t.open} $current={t.current}>{t.icon}</TaskButton>
        ))}
        <Tray>
          <Language>EN</Language>
          <AlertTray /><FlagTray /><PowerTray /><SignalTray /><SoundTray /><BluetoothTray /><TelegramIcon size={15} badge />
          <Clock>8:44<br />22.11.2025</Clock>
          <ShowDesktop aria-label="Show desktop" />
        </Tray>
      </Taskbar>
    </Desktop>
  );
}
